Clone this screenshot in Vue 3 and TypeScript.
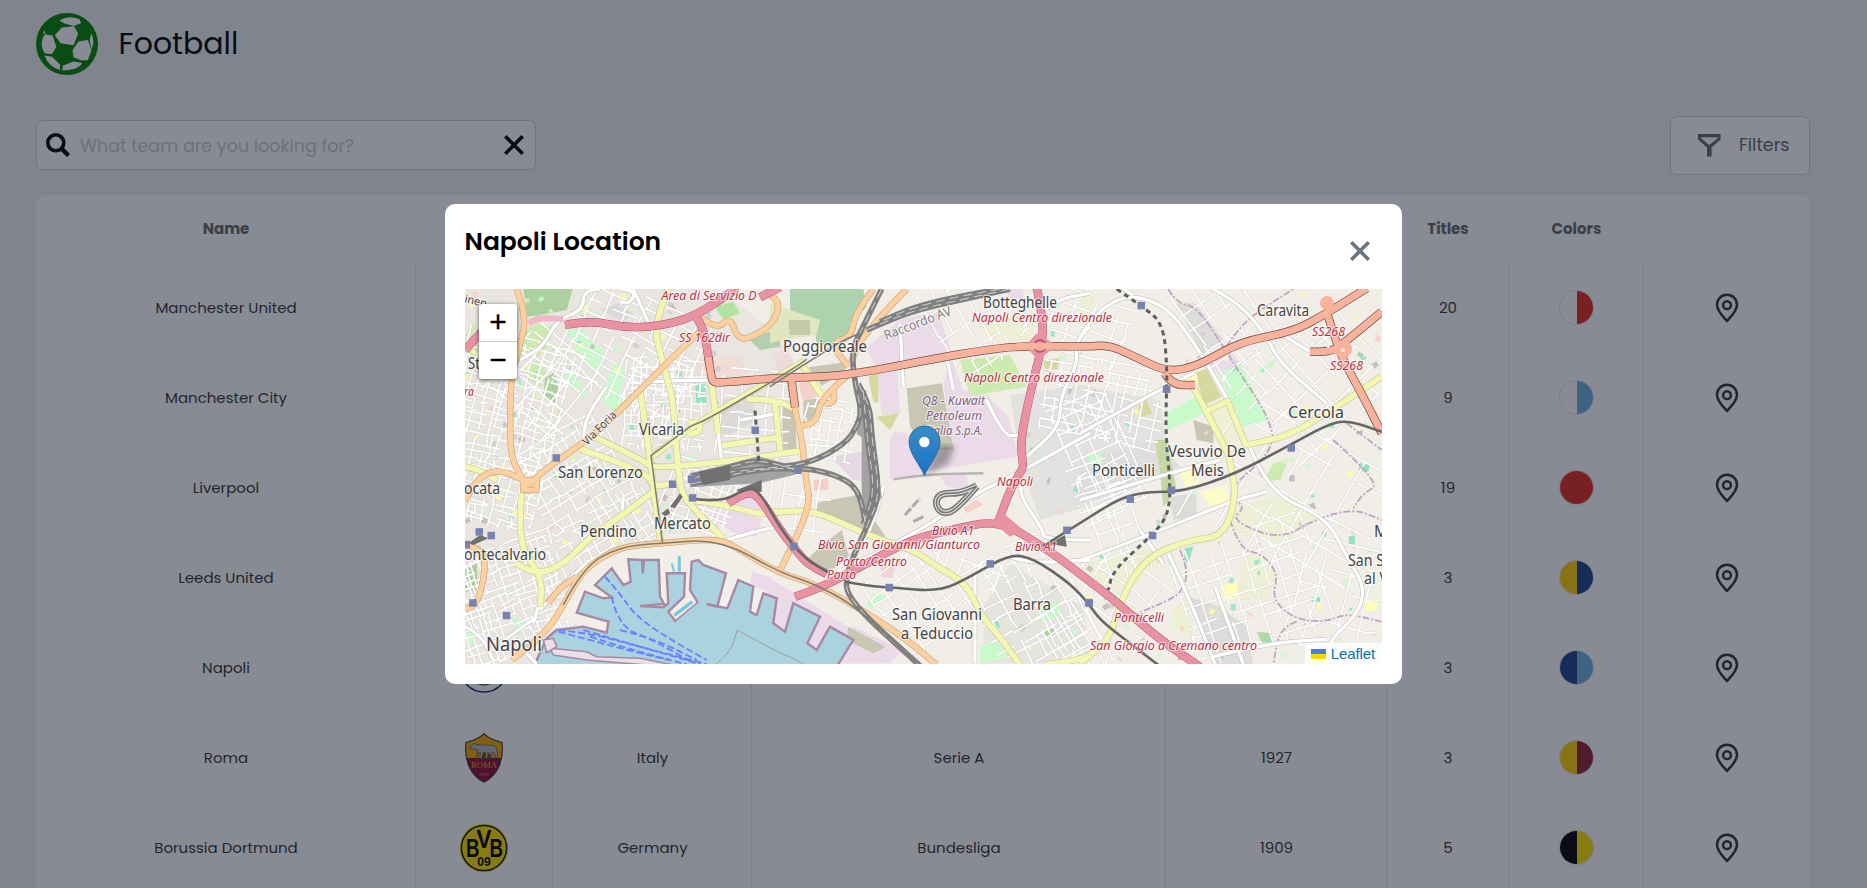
<script setup lang="ts">
interface Team {
  name: string
  country?: string
  league?: string
  founded?: string
  titles: number
  left: string
  right: string
  crest?: 'napoli' | 'roma' | 'bvb'
}

const teams: Team[] = [
  { name: 'Manchester United', titles: 20, left: '#ffffff', right: '#de2a20' },
  { name: 'Manchester City', titles: 9, left: '#ffffff', right: '#6cabdd' },
  { name: 'Liverpool', titles: 19, left: '#de2a20', right: '#de2a20' },
  { name: 'Leeds United', titles: 3, left: '#ffcd00', right: '#1d428a' },
  { name: 'Napoli', titles: 3, left: '#1d428a', right: '#6cabdd', crest: 'napoli' },
  { name: 'Roma', country: 'Italy', league: 'Serie A', founded: '1927', titles: 3, left: '#ffcd00', right: '#8e1f2f', crest: 'roma' },
  { name: 'Borussia Dortmund', country: 'Germany', league: 'Bundesliga', founded: '1909', titles: 5, left: '#000000', right: '#fde100', crest: 'bvb' },
]

type Pt = [number, number]

/* Survey sheets: each has its own origin and is plotted at a third of map scale. */
const sheets: Record<string, Pt> = {
  A: [440, 200],
  B: [770, 280],
  C: [1080, 200],
  D: [440, 430],
  E: [770, 450],
  F: [1080, 440],
  G: [445, 204],
}

function pts(src: string): Pt[] {
  let o: Pt = [0, 0]
  let k = 1
  const out: Pt[] = []
  for (const t of src.trim().split(/\s+/)) {
    if (sheets[t]) {
      o = sheets[t]
      k = 1 / 3
    } else {
      const [x, y] = t.split(',').map(Number)
      out.push([o[0] + x * k, o[1] + y * k])
    }
  }
  return out
}

const f = (n: number) => n.toFixed(1)

function curve(src: string): string {
  const p = pts(src)
  let d = `M${f(p[0][0])} ${f(p[0][1])}`
  for (let i = 1; i < p.length - 1; i++) {
    const mx = (p[i][0] + p[i + 1][0]) / 2
    const my = (p[i][1] + p[i + 1][1]) / 2
    d += `Q${f(p[i][0])} ${f(p[i][1])} ${f(mx)} ${f(my)}`
  }
  const l = p[p.length - 1]
  return d + `L${f(l[0])} ${f(l[1])}`
}

function poly(src: string): string {
  return pts(src).map((q) => `${f(q[0])},${f(q[1])}`).join(' ')
}

const areas: [string, string][] = [
  ['#e9e6e2', '465,289 720,289 790,345 790,460 700,530 640,540 590,560 545,620 545,664 465,664'],
  ['#e4e2e0', '1010,395 1080,385 1160,400 1170,470 1110,500 1040,520 1022,470'],
  ['#e6e4e1', 'E 720,340 940,470 960,640 640,640 640,470'],
  ['#dddcdb', 'F 270,170 350,160 350,230 280,240'],
  ['#dddcdb', 'F 330,470 420,500 500,560 520,672 400,672'],
  ['#dddcdb', 'C 290,310 345,310 430,420 370,470'],
  ['#e0dedc', 'F 0,60 230,0 300,80 0,170'],
  ['#add19e', 'A 250,267 398,267 380,330 300,345 262,350'],
  ['#cdebb0', 'A 245,390 290,370 340,380 325,440 290,475 240,470'],
  ['#c8facc', 'A 370,390 430,388 450,425 492,450 488,510 450,500 410,460 400,420'],
  ['#c8facc', 'A 520,488 555,510 540,570 560,640 520,635 485,595'],
  ['#c8facc', 'A 360,510 400,505 425,560 390,565'],
  ['#cdebb0', 'A 250,505 295,480 320,520 300,560 265,540'],
  ['#add19e', 'A 315,535 345,515 355,570 345,610 310,590'],
  ['#cdebb0', 'A 75,400 105,370 120,460 90,470'],
  ['#d9d9d9', 'A 480,330 530,310 580,340 550,365'],
  ['#b0e3a0', 'A 825,320 880,305 900,340 850,358'],
  ['#b3cfae', 'A 930,420 1020,380 1020,440 960,450'],
  ['#f1dcd8', 'A 765,480 900,470 925,520 830,540 770,540'],
  ['#8fe3c0', 'G 750,545 780,540 785,595 755,600'],
  ['#dcdad8', 'G 825,590 920,560 930,650 860,690 830,690'],
  ['#add3ae', 'B 60,27 280,27 290,80 240,130 235,170 180,200 140,190 130,120 60,110'],
  ['#dfe6c0', 'B 0,70 60,90 150,120 140,165 40,180 0,190'],
  ['#c6c9a8', 'B 55,120 120,120 120,165 60,165'],
  ['#ebdbe8', 'B 285,205 390,120 505,90 548,232 320,262'],
  ['#ebdbe8', 'B 320,260 382,265 390,400 335,405'],
  ['#ebdbe8', 'B 545,240 580,330 650,345 715,410 745,530 555,560 520,310'],
  ['#ebdbe8', 'B 358,480 375,455 410,460 430,500 440,590 360,597'],
  ['#ebdbe8', 'B 700,27 760,27 760,55 730,60'],
  ['#c7c7b4', 'B 410,325 515,310 555,530 500,550 420,440'],
  ['#d6d99f', 'B 318,410 388,400 360,450'],
  ['#d6d99f', 'B 295,290 325,280 325,370 310,365'],
  ['#cdebb0', 'B 570,240 720,225 770,320 600,348'],
  ['#eef0d5', 'B 620,120 790,100 790,180 660,190'],
  ['#d6d99f', 'B 820,240 870,235 860,275 825,275'],
  ['#f4d0c8', 'G 1060,540 1105,520 1125,575 1075,590'],
  ['#ebdcdc', 'G 975,445 1030,440 1050,480 1000,500'],
  ['#c7c7b4', 'G 1075,590 1125,580 1110,650 1075,655'],
  ['#c7c7b4', 'G 1090,490 1200,475 1200,500 1130,545'],
  ['#c7c7b4', 'G 1010,600 1050,620 1055,735 1015,735'],
  ['#eef0d5', 'C 0,280 50,270 20,400 0,400'],
  ['#ebdbe8', 'C 388,490 440,440 480,490 415,522'],
  ['#c8facc', 'C 415,520 482,490 560,660 490,680'],
  ['#d6d99f', 'C 345,520 380,505 425,590 375,615'],
  ['#c8facc', 'C 260,640 345,592 375,640 260,692'],
  ['#ffffc0', 'C 290,540 350,520 355,550 300,560'],
  ['#eef0d5', 'C 385,640 440,615 480,745 440,745'],
  ['#c7c7b4', 'C 340,660 400,680 400,730 350,720'],
  ['#c8facc', 'C 540,505 585,480 580,500 540,520'],
  ['#d6d99f', 'C 175,620 200,600 215,640 180,655'],
  ['#eef0d5', 'F 500,190 640,160 740,230 600,305 450,280 455,230'],
  ['#eef0d5', 'F 490,340 545,345 590,400 565,480 450,480 480,420'],
  ['#eef0d5', 'F 0,375 200,320 240,370 160,440 80,450'],
  ['#eef0d5', 'F 280,500 320,480 340,600 270,560'],
  ['#fdfcc9', 'F 360,155 440,135 450,185 390,200'],
  ['#fdfcc9', 'F 300,95 350,90 365,130 315,140'],
  ['#ffffb8', 'F 420,435 470,430 475,475 430,482'],
  ['#ffffb8', 'F 850,480 893,480 890,510 855,515'],
  ['#b5d6a6', 'F 530,575 575,580 580,605 545,608'],
  ['#8fe3c0', 'F 840,70 870,75 865,95 835,90'],
  ['#8fe3c0', 'F 805,290 825,285 825,310 808,315'],
  ['#8fe3c0', 'F 695,472 720,472 720,485 695,485'],
  ['#8fe3c0', 'F 315,325 340,320 325,370 312,360'],
  ['#c3d8a2', 'F 225,0 260,0 290,150 250,200 240,90'],
  ['#cdebb0', 'F 580,70 625,60 600,120 550,125'],
  ['#c8facc', 'F 20,45 60,30 70,70 35,80'],
  ['#c7c7b4', 'E 140,158 262,135 350,265 240,225 140,185'],
  ['#c7c7b4', 'E 150,290 215,240 240,330 170,365 110,330'],
  ['#e7d9e4', 'E 180,20 310,0 320,100 250,90'],
  ['#ebdbe8', 'E 360,0 560,0 700,20 370,85'],
  ['#ebdbe8', 'E 0,400 90,440 250,560 210,640 0,520'],
  ['#ebdbe8', 'E 250,530 400,600 360,640 230,640'],
  ['#c7c7b4', 'E 235,530 345,590 310,610 230,570'],
  ['#ebdbe8', 'E 510,80 590,70 595,120 530,110'],
  ['#c8facc', 'E 310,430 350,440 300,480 290,460'],
  ['#c8facc', 'E 800,470 860,455 880,500 810,515'],
  ['#c8facc', 'E 630,590 670,570 720,620 630,640'],
  ['#8fe3c0', 'E 665,515 680,508 690,530 672,540'],
  ['#add19e', 'E 820,545 850,535 855,555 825,565'],
  ['#f4d4d4', 'E 330,345 375,340 370,385 335,380'],
  ['#f4d0c8', 'E 580,175 620,150 640,165 590,190'],
  ['#f4d0c8', 'E 130,90 175,85 175,120 132,120'],
  ['#ebdbe8', 'D 815,260 870,240 965,265 950,320 880,310'],
  ['#ebdbe8', 'D 860,210 910,190 960,200 965,240 900,235'],
  ['#ebdbe8', 'D 930,430 1020,430 1020,520 980,480 930,470'],
  ['#add19e', 'D 75,420 110,400 115,480 75,485'],
  ['#c8facc', 'D 75,595 105,600 100,640 75,640'],
  ['#c8facc', 'D 215,560 260,575 230,600'],
]

const sea = poly(
  'D 350,600 430,590 500,608 505,575 410,548 435,485 490,505 515,502 465,465 515,415 550,465 572,455 565,388 606,390 608,430 612,390 656,390 660,500 672,522 600,528 670,532 685,520 680,430 735,430 732,500 685,545 705,572 772,515 750,480 755,395 775,390 790,405 858,430 832,530 800,522 862,535 895,450 940,470 930,545 950,555 970,490 1010,505 1000,580 E 45,545 70,460 150,500 112,580 140,600 180,530 250,570 200,650 D 480,720 290,720 290,690 320,625',
)

/* Irregular street grids: centre, extent, bearing and block size. */
const districts: number[][] = [
  [500, 430, 110, 190, 15, 8],
  [510, 600, 110, 120, 70, 8],
  [590, 500, 150, 100, 60, 10],
  [630, 350, 130, 110, 25, 13],
  [545, 385, 90, 90, 40, 16],
  [665, 405, 80, 90, 3, 7],
  [755, 415, 70, 90, 5, 13],
  [700, 500, 70, 70, 20, 10],
  [800, 500, 60, 60, 10, 18],
  [830, 430, 50, 60, 8, 8],
  [960, 320, 110, 60, 60, 17],
  [1080, 325, 100, 60, 20, 17],
  [1100, 400, 130, 80, 12, 12],
  [1100, 455, 120, 60, 65, 11],
  [1110, 520, 120, 50, 70, 12],
  [1225, 325, 110, 70, 55, 20],
  [1310, 380, 120, 130, 48, 19],
  [1290, 500, 180, 140, 30, 30],
  [1250, 590, 120, 140, 72, 18],
  [1340, 600, 90, 110, 15, 28],
  [1030, 610, 130, 100, 62, 12],
  [920, 600, 90, 80, 55, 13],
  [1120, 590, 90, 60, 35, 18],
  [960, 560, 100, 40, 20, 18],
  [1080, 650, 100, 50, 60, 14],
]

let seed = 20231
function rnd(): number {
  seed = (seed * 16807) % 2147483647
  return seed / 2147483647
}

function streets(): string {
  let d = ''
  for (const [cx, cy, w, h, deg, gap] of districts) {
    const a = (deg * Math.PI) / 180
    const put = (u: number, v: number) =>
      `${f(cx + u * Math.cos(a) - v * Math.sin(a))} ${f(cy + u * Math.sin(a) + v * Math.cos(a))}`
    for (let u = -w / 2; u < w / 2; u += gap * (0.6 + rnd() * 0.9)) {
      let v = -h / 2 + rnd() * gap
      while (v < h / 2) {
        const len = gap * (1 + Math.floor(rnd() * 5))
        const s = (rnd() - 0.5) * 5
        d += `M${put(u, v)}L${put(u + s, Math.min(v + len, h / 2))}`
        v += len + (rnd() < 0.5 ? gap : 0)
      }
    }
    for (let v = -h / 2; v < h / 2; v += gap * (0.6 + rnd() * 0.9)) {
      let u = -w / 2 + rnd() * gap
      while (u < w / 2) {
        const len = gap * (1 + Math.floor(rnd() * 4))
        const s = (rnd() - 0.5) * 5
        d += `M${put(u, v)}L${put(Math.min(u + len, w / 2), v + s)}`
        u += len + (rnd() < 0.5 ? gap : 0)
      }
    }
  }
  return d
}
const streetPath = streets()

const patchHues = ['#ffff9e', '#c8facc', '#8fe3c0', '#cdcccb', '#b9b8b4', '#f7d0c6', '#dff0c0']
const patches = Array.from({ length: 330 }, () => {
  const west = rnd() < 0.55
  const x = west ? 466 + rnd() * 260 : 1000 + rnd() * 378
  const y = 290 + rnd() * (west ? 250 : 370)
  return { x, y, w: 2 + rnd() * 5, h: 2 + rnd() * 5, r: rnd() * 90, c: patchHues[Math.floor(rnd() * 7)] }
})

const lanes = [
  'C 0,410 80,285 250,300 370,470 440,595',
  'C 400,267 480,310 560,410 600,490 740,610',
  'C 0,700 200,590 340,520',
  'C 600,400 690,455',
  'C 130,267 160,285',
  'F 0,180 300,90 420,60',
  'F 505,10 560,155 740,232 800,350 855,440 835,520 760,590 740,640',
  'F 0,362 220,280 450,185 560,155',
  'F 265,340 330,480 405,672',
  'F 405,440 490,672',
  'F 400,650 560,610 740,598',
  'F 250,372 180,270',
  'B 960,140 915,180 925,250 870,350 870,440 770,530',
  'B 960,460 780,560 700,600 E 620,130 460,235 260,340',
  'B 760,140 850,60 960,40',
  'E 960,270 820,270 820,240 750,140 755,80',
  'E 720,320 770,340 960,330',
  'E 615,370 615,640',
  'E 340,110 300,265 210,350',
  'A 580,267 640,400',
  'A 480,267 430,270 430,330 350,360 310,440 240,480',
  'A 540,267 590,270 570,310 540,305',
  'A 500,560 440,640 430,720',
  'A 610,545 800,540',
  'A 1020,640 900,660',
  'D 300,540 360,470 440,400',
  'D 550,200 545,260',
  'D 280,580 295,530',
  'D 180,640 290,560',
  'D 240,650 290,702',
  'D 75,590 120,610 160,690',
  'D 860,330 960,300 1020,290',
  'G 820,690 830,770',
  'B 645,350 700,470 750,465',
  'B 390,130 400,320',
  'B 530,230 550,330',
]

const yellow = [
  'A 685,267 640,370 665,480 700,600 705,700 D 720,170 740,215 850,325',
  'A 600,570 620,700 D 640,170 662,340',
  'G 440,695 600,770 620,795 870,770 1070,740',
  'G 405,735 600,800 625,850 700,835',
  'D 640,185 540,260 440,330 380,395 300,435 225,400',
  'D 245,190 230,340 305,435 302,530',
  'D 75,110 120,120 170,150',
  'D 750,210 860,225 960,255 1020,240 E 0,190 120,178 240,230 320,265 430,300 500,350 590,400 635,500 690,560 750,645',
  'C 340,560 440,750 F 450,60 470,170 430,290 330,300 200,350 125,470 90,600 0,668',
  'C 375,635 443,603 443,603 497,735 497,735 620,710 740,640 905,530',
  'G 800,540 820,690',
  'G 1080,470 960,540 760,655 625,755',
  'G 1070,480 1130,575',
  'G 905,585 985,585 1060,620',
  'G 990,590 1005,740',
  'G 830,725 1000,700',
  'G 730,655 765,655 765,685 730,690',
  'E 820,645 900,635 960,618',
]

const orange = [
  'A 230,267 262,350 235,450 212,540 D 210,0 215,90 250,150 265,170',
  'D 265,165 300,130 370,80 480,0 A 600,570 700,470 790,385',
  'A 780,350 830,390 870,350 895,420 940,410 1000,370 1020,310 990,285 1000,267',
  'D 75,215 100,155 170,115 250,150',
  'D 75,345 115,350 140,400 115,520 75,538',
  'D 250,150 290,150 290,150 290,180 290,180 250,180 250,180 250,150',
  'D 215,690 320,615 400,470 440,410 540,350 660,340 840,325 900,360 1020,430 E 130,400 260,470 400,560 500,645',
  'D 325,520 350,480 410,440',
  'G 1035,530 1050,620 1070,700 1082,820 1097,910 1005,1100',
  'B 410,27 270,170 240,260',
  'B 310,27 255,100 245,170 180,190 235,260',
  'G 1225,500 1130,575 1115,655 1060,668',
  'G 1140,600 1170,600 1165,550',
]

const trunk = [
  'A 805,470 812,520 818,545 835,549 1020,533 B 100,292 240,285 500,235 630,212 750,198 960,200 C 90,435 180,478 260,515 350,500 480,425 640,395 740,340 860,265',
  'C 905,335 780,440 745,455 690,455',
  'C 738,330 775,445 800,500 850,590 905,700',
  'C 255,520 275,555 345,555',
  'G 1040,530 1050,610',
]

const motor = [
  'A 375,375 450,360 560,385 680,375 770,345 870,280 890,262',
  'A 960,292 1020,262',
  'A 765,345 790,380 805,470 808,490',
  'B 800,20 818,110 818,190 790,300 750,480 760,560 E 755,60 720,120 685,215',
  'E 75,440 150,415 280,345 420,270 560,235 690,210 850,310 960,395 F 90,470 240,600 360,680',
  'D 865,220 905,192 950,188 1020,300 E 70,290 110,340 170,372',
  'A 75,450 130,390',
]

const yards = [
  'G 1310,255 1250,375 1220,440 1230,540 1250,620 1235,670 1200,720 1100,775 1000,790 740,815',
  'G 1240,540 1275,600 1280,700 1305,870 1270,960 1200,1110 1210,1190 1430,1390',
  'G 1255,560 1265,700 1290,860 1255,960',
  'B 720,27 570,60 420,95 290,150',
  'B 690,27 560,50 430,82 330,125',
  'G 740,840 900,800 1060,790 1160,808 1240,850 1262,960',
  'G 740,825 850,790 940,765 1060,800',
]

const rails = [
  'G 745,885 830,895 900,855 940,855 1010,980 1080,1065 1150,1105',
  'E 225,395 300,408 360,412 510,425 600,380 720,312 790,325 900,400 955,460 F 60,540 150,610 235,675',
  'E 820,288 960,200 F 120,175 200,155 310,155 470,100 620,20 C 740,675 800,660 905,695',
]

const tramline = [
  'G 1085,465 1070,480 790,645 740,665 740,665 618,755 618,755 652,1015',
  'D 370,525 430,410 540,350 660,340 840,328 1020,428 E 130,400 260,470 440,640',
  'B 0,320 200,190 270,160',
]

const tunnels = [
  'C 110,267 185,318 250,370 262,510 258,620 258,710 F 272,150 262,230 217,285 100,390 85,450',
  'G 930,620 942,780',
]

const borders = [
  'C 265,267 290,310 350,320 430,440 480,520 560,640 590,745 F 430,160 500,200 450,240 600,300 700,240 820,205 905,240',
  'C 440,440 480,370 640,267',
  'C 800,670 905,750',
  'F 760,0 905,130 850,160 820,205',
  'F 450,240 480,330 545,340 595,400 575,480 650,540 740,545 800,520 905,545',
  'F 300,330 350,440 180,520 100,540',
  'F 650,545 600,560 580,672',
]

const ferries = [
  'D 495,440 540,490 580,550 660,610 800,690',
  'D 515,500 535,590 640,630 760,700',
  'D 355,600 450,610 560,640 800,702',
  'D 355,605 450,630 600,670 740,702',
  'D 430,600 600,650 780,702',
  'D 450,620 560,655 690,690',
  'D 540,600 640,625 770,690',
]

const stations = pts(
  'D 348,83 697,162 754,147 757,203 117,305 153,316 78,343 98,518 199,556 945,0 E 83,60 71,289 357,412 660,341 890,240 955,457 C 183,316 259,567 F 633,23 150,177 273,150 217,286 27,488',
)

type Label = [string, number, number, number, number]
const places: Label[] = [
  ['St', 468, 480, 369, 16],
  ['Vicaria', 639, 684, 435, 16],
  ['Poggioreale', 783, 867, 352, 16],
  ['Botteghelle', 983, 1057, 308, 15.5],
  ['Caravita', 1257, 1309, 316, 15.5],
  ['Cercola', 1288, 1344, 418, 17],
  ['Vesuvio De', 1168, 1246, 457, 16],
  ['Meis', 1191, 1224, 476, 16],
  ['Ponticelli', 1092, 1155, 476, 16],
  ['San S', 1348, 1384, 566, 15.5],
  ['al V', 1364, 1388, 584, 15.5],
  ['M', 1374, 1388, 537, 15.5],
  ['Barra', 1013, 1051, 610, 16],
  ['San Giovanni', 892, 982, 620, 16],
  ['a Teduccio', 901, 973, 639, 16],
  ['San Lorenzo', 558, 643, 478, 16],
  ['Pendino', 580, 637, 537, 16],
  ['Mercato', 654, 711, 529, 16],
  ['ocata', 464, 500, 494, 16],
  ['ontecalvario', 464, 546, 560, 16],
  ['Napoli', 486, 542, 651, 20],
]
const exits: Label[] = [
  ['Area di Servizio D', 661.5, 756.5, 299.5, 13],
  ['SS 162dir', 679, 730, 341.5, 13],
  ['ra', 464, 474, 396, 13],
  ['Napoli Centro direzionale', 972, 1112, 322, 13],
  ['Napoli Centro direzionale', 964, 1104, 381.5, 13],
  ['SS268', 1312, 1345, 336, 13],
  ['SS268', 1330, 1363, 370, 13],
  ['Napoli', 997, 1033, 486, 13],
  ['Bivio A1', 932, 974, 535, 13],
  ['Bivio San Giovanni/Gianturco', 818, 980, 549, 13],
  ['Porto/Centro', 836, 907, 566, 13],
  ['Porto', 827, 856, 579, 13],
  ['Bivio A1', 1015, 1057, 551, 13],
  ['Ponticelli', 1114, 1164, 622, 13],
  ['San Giorgio a Cremano centro', 1090, 1257, 650, 13],
]
const works: Label[] = [
  ['Q8 - Kuwait', 922, 985, 405, 13],
  ['Petroleum', 926, 982, 420, 13],
  ['Italia S.p.A.', 926, 983, 435, 13],
]

const roadClasses = [
  { id: 'lane', lines: lanes },
  { id: 'yellow', lines: yellow },
  { id: 'orange', lines: orange },
  { id: 'motor', lines: motor },
  { id: 'trunk', lines: trunk },
]
</script>

<template>
  <div class="page">
    <header class="brand">
      <svg class="ball" viewBox="0 0 62 62">
        <circle cx="31" cy="31" r="31" fill="#008000" />
        <g fill="#fff">
          <path d="M23.500 7.500Q33 1.500 43.500 6.300L45 10.300 37.500 13 28.500 10.500Z" />
          <path d="M25.800 14.500 38 13.200 42.200 20.800 37.400 32.300 24.600 30.300 18.800 22.300Z" />
          <path d="M8.800 21.300 16.500 22.500 20.400 34 15.800 41.300 8.600 40.300Q2.500 31 8.800 21.300Z" />
          <path d="M42.500 28.500 51.800 27 55.500 37 51.800 47.300 45 47.300 37.500 44.300 36.500 37Z" />
          <path d="M26.500 52.700 37.500 48.500 46 50Q43 57 26.500 57.500Z" />
          <path d="M8.500 42.600 16 43.800 24 51.500V57Q12.500 54 8.500 42.600Z" />
          <path d="M55.300 20.500Q59.500 28 55.500 36L53.500 27Z" />
          <path d="M8.300 17.500 9.500 20 7 21Z" />
        </g>
      </svg>
      <h1>Football</h1>
    </header>

    <div class="toolbar">
      <label class="search">
        <svg width="24" height="24" viewBox="0 0 24 24" fill="none" stroke="#000" stroke-width="3.600">
          <circle cx="9.800" cy="9.800" r="8" />
          <path d="M15.500 15.500 22.600 22.600" stroke-width="4.400" />
        </svg>
        <span class="hint">What team are you looking for?</span>
        <svg width="20" height="20" viewBox="0 0 20 20" stroke="#000" stroke-width="3.600">
          <path d="M1.300 1.300 18.700 18.700M18.700 1.300 1.300 18.700" />
        </svg>
      </label>
      <button class="filters">
        <svg width="23" height="23" viewBox="0 0 23 23">
          <path fill="#666" fill-rule="evenodd" d="M0 0H22.600V5.600L13.600 13.400V22.400H9V13.400L0 5.600ZM3 3.200V4.200L11.300 11 19.600 4.200V3.200Z" />
        </svg>
        <span>Filters</span>
      </button>
    </div>

    <section class="table">
      <div class="row head">
        <span>Name</span><span /><span /><span /><span /><span>Titles</span><span>Colors</span><span />
      </div>
      <div v-for="t in teams" :key="t.name" class="row">
        <span>{{ t.name }}</span>
        <span class="figure">
          <svg v-if="t.crest === 'napoli'" width="50" height="50" viewBox="0 0 50 50" fill="none">
            <circle cx="25" cy="25" r="24" stroke="#12206b" stroke-width="1.400" />
            <ellipse cx="25" cy="24" rx="16" ry="18" stroke="#12206b" stroke-width="1" />
          </svg>
          <svg v-else-if="t.crest === 'roma'" width="38" height="50" viewBox="0 0 38 50">
            <path d="M19 .6C14 6 7 8 1 9.500C-1 27 5 42 19 49.200C33 42 39 27 37 9.500C31 8 24 6 19 .6Z" fill="#8e0a32" />
            <path d="M19 .6C14 6 7 8 1 9.500C.4 15 .5 20 1.300 25H36.700C37.500 20 37.600 15 37 9.500C31 8 24 6 19 .6Z" fill="#f0a800" />
            <path d="M19 .6C14 6 7 8 1 9.500C-1 27 5 42 19 49.200C33 42 39 27 37 9.500C31 8 24 6 19 .6Z" fill="none" stroke="#333" stroke-width="1.100" />
            <path d="M5.500 13 8.500 10.500 12 11.500 17 12 29 12.500Q33 14 32.500 25H30.500L29.500 20 27 19.500V25H25V20L18 19.500 17 25.500H15L15.500 19 13 20V25.500H11.500L12.500 17 8.500 16 5 15.500Z" fill="#b5b5b5" stroke="#444" stroke-width=".6" />
            <path d="M17 24 18.500 20 21 20.500 20 25.500H17.500ZM22 25 23 21 25.500 21 25 26H22Z" fill="#444" />
            <text x="19" y="34.500" text-anchor="middle" class="roma-name" textLength="26" lengthAdjust="spacingAndGlyphs">ROMA</text>
            <text x="19" y="42.500" text-anchor="middle" class="roma-year">1927</text>
          </svg>
          <svg v-else-if="t.crest === 'bvb'" width="50" height="50" viewBox="0 0 50 50">
            <circle cx="25" cy="25" r="24.300" fill="#fde100" />
            <circle cx="25" cy="25" r="22.600" fill="none" stroke="#111" stroke-width="1.500" />
            <g class="bvb">
              <text x="13.800" y="33.500" font-size="25" textLength="13.500" lengthAdjust="spacingAndGlyphs">B</text>
              <text x="25" y="24.500" font-size="25" textLength="15" lengthAdjust="spacingAndGlyphs">V</text>
              <text x="37.300" y="33.500" font-size="25" textLength="13.500" lengthAdjust="spacingAndGlyphs">B</text>
              <text x="25" y="43.300" font-size="13" textLength="13.500" lengthAdjust="spacingAndGlyphs">09</text>
            </g>
          </svg>
        </span>
        <span>{{ t.country }}</span>
        <span>{{ t.league }}</span>
        <span>{{ t.founded }}</span>
        <span>{{ t.titles }}</span>
        <span class="figure">
          <i class="kit"><b :style="{ background: t.left }" /><b :style="{ background: t.right }" /></i>
        </span>
        <span class="figure">
          <svg width="24" height="30" viewBox="0 0 24 30" fill="none" stroke="#333" stroke-width="2.500">
            <path d="M12 28C9 24.500 2 18.500 2 11.800A10 10 0 0 1 22 11.800C22 18.500 15 24.500 12 28Z" stroke-linejoin="round" />
            <circle cx="12" cy="12.200" r="3.900" />
          </svg>
        </span>
      </div>
    </section>

    <div class="overlay">
      <div class="modal">
        <div class="modal-head">
          <h2>Napoli Location</h2>
          <svg class="close" width="20" height="20" viewBox="0 0 20 20" stroke="#6b7280" stroke-width="3.600">
            <path d="M1.300 1.300 18.700 18.700M18.700 1.300 1.300 18.700" />
          </svg>
        </div>
        <div class="map">
          <svg width="917" height="375" viewBox="465 289 917 375">
            <defs>
              <linearGradient id="pin" x1="0" y1="0" x2="0" y2="1">
                <stop offset="0" stop-color="#3a8ec4" />
                <stop offset="1" stop-color="#1b6fc6" />
              </linearGradient>
              <filter id="soft"><feGaussianBlur stdDeviation="3" /></filter>
            </defs>
            <rect x="465" y="289" width="917" height="375" fill="#f1eee8" />
            <polygon v-for="(a, i) in areas" :key="'a' + i" :points="poly(a[1])" :fill="a[0]" />
            <rect
              v-for="(p, i) in patches" :key="'p' + i" :x="p.x" :y="p.y" :width="p.w" :height="p.h"
              :fill="p.c" :transform="`rotate(${p.r} ${p.x} ${p.y})`" opacity=".8"
            />
            <path :d="streetPath" class="street-edge" />
            <path :d="streetPath" class="street" />
            <polygon :points="poly('D 345,560 430,425 560,365 660,352 850,345 1020,440 1020,600 850,600 500,610')" fill="#f2efe9" />
            <polygon :points="poly('D 935,425 1020,450 E 0,385 90,440 250,540 350,640 0,640 0,510 D 980,480 930,470')" fill="#ebdbe8" />
            <polygon :points="poly('E 235,530 345,590 310,610 230,570')" fill="#c7c7b4" />
            <polygon :points="sea" class="sea" />
            <polygon :points="poly('D 330,655 440,665 470,680 600,685 700,705 620,705 440,690 340,675')" class="pier" />
            <polygon :points="poly('D 310,630 340,625 350,650 320,668')" class="pier" />
            <path :d="curve('D 820,710 870,670 892,600 892,600 1020,670 E 60,620 130,660')" fill="none" stroke="#a39c98" />
            <path v-for="(l, i) in ferries" :key="'f' + i" :d="curve(l)" class="ferry" />
            <path :d="curve('D 695,400 702,425')" stroke="#79c9dd" stroke-width="2" />
            <path :d="curve('D 718,378 718,425')" stroke="#79c9dd" stroke-width="3" />
            <polygon :points="poly('D 690,548 708,568 768,518 752,495')" fill="#f2efe9" />
            <path :d="curve('D 703,556 757,515')" stroke="#79c9dd" stroke-width="3.500" />
            <path v-for="(l, i) in borders" :key="'b' + i" :d="curve(l)" class="border" />
            <g v-for="c in roadClasses.slice(0, 3)" :key="c.id" :class="c.id">
              <path v-for="(l, i) in c.lines" :key="i" :d="curve(l)" class="edge" />
              <path v-for="(l, i) in c.lines" :key="'i' + i" :d="curve(l)" class="core" />
            </g>
            <polygon :points="poly('G 735,808 830,785 940,757 1050,788 1050,812 940,838 735,850')" fill="#a3a3a3" />
            <polygon :points="poly('G 1250,560 1275,600 1310,880 1265,960 1250,860 1250,700 1235,690')" fill="#a3a3a3" />
            <path v-for="(l, i) in yards" :key="'y' + i" :d="curve(l)" class="yard" />
            <path v-for="(l, i) in yards" :key="'z' + i" :d="curve(l)" class="yard-gap" />
            <g class="shed">
              <polygon :points="poly('D 775,125 870,105 870,150 790,165')" />
              <polygon :points="poly('D 665,250 685,235 690,250 675,260')" />
              <polygon :points="poly('D 690,230 720,190 728,200 705,235')" />
              <polygon :points="poly('D 85,340 120,315 145,325 100,345')" />
              <polygon :points="poly('D 890,180 965,150 965,185 900,190')" />
              <polygon :points="poly('E 820,290 885,255 890,290 860,285')" />
            </g>
            <path :d="curve('E 620,108 560,180 515,192 495,160 510,130 570,130 620,108')" fill="none" stroke="#777" stroke-width="7" />
            <path :d="curve('E 620,108 560,180 515,192 495,160 510,130 570,130 620,108')" fill="none" stroke="#ddd" stroke-width="4" />
            <path :d="curve('E 620,108 560,180 515,192 495,160 510,130 570,130 620,108')" fill="none" stroke="#777" stroke-width="1.600" />
            <path :d="curve('E 405,195 450,145')" stroke="#aaa" stroke-width="3" stroke-dasharray="9 2" />
            <path :d="curve('E 430,215 460,200')" stroke="#aaa" stroke-width="3" />
            <path :d="curve('E 370,88 470,72 640,70')" fill="none" stroke="#b5b5b5" stroke-width="2.500" />
            <path :d="curve('A 265,370 290,352 370,358')" class="tunnel-road" />
            <g v-for="c in roadClasses.slice(3)" :key="c.id" :class="c.id">
              <path v-for="(l, i) in c.lines" :key="i" :d="curve(l)" class="edge" />
              <path v-for="(l, i) in c.lines" :key="'i' + i" :d="curve(l)" class="core" />
            </g>
            <polygon :points="poly('E 650,220 700,190 760,240 720,260 690,235')" fill="#e892a2" />
            <polygon :points="poly('B 765,198 800,160 850,190 850,205 805,240')" fill="#e892a2" />
            <circle cx="1040" cy="346" r="6" fill="none" stroke="#a3506a" stroke-width="1.500" />
            <path :d="curve('B 740,199 870,199')" stroke="#f9b29c" stroke-width="6.500" />
            <circle cx="1327" cy="303" r="7" fill="#f9b29c" />
            <circle cx="1343" cy="349" r="9" fill="#f9b29c" />
            <circle cx="1343" cy="350" r="2" fill="#f1eee8" />
            <circle cx="1328" cy="346" r="2" fill="#f1eee8" />
            <path v-for="(l, i) in rails" :key="'r' + i" :d="curve(l)" class="rail" />
            <path v-for="(l, i) in tramline" :key="'t' + i" :d="curve(l)" class="tram" />
            <path v-for="(l, i) in tunnels" :key="'u' + i" :d="curve(l)" class="tunnel" />
            <rect v-for="(s, i) in stations" :key="'s' + i" :x="s[0] - 3.500" :y="s[1] - 3.500" width="7.500" height="7.500" fill="#7981b0" />
            <g class="label works">
              <text v-for="(l, i) in works" :key="i" :x="l[1]" :y="l[3]" :font-size="l[4]" :textLength="l[2] - l[1]" lengthAdjust="spacingAndGlyphs">{{ l[0] }}</text>
            </g>
            <g class="label places">
              <text v-for="(l, i) in places" :key="i" :x="l[1]" :y="l[3]" :font-size="l[4]" :textLength="l[2] - l[1]" lengthAdjust="spacingAndGlyphs">{{ l[0] }}</text>
            </g>
            <g class="label exits">
              <text v-for="(l, i) in exits" :key="i" :x="l[1]" :y="l[3]" :font-size="l[4]" :textLength="l[2] - l[1]" lengthAdjust="spacingAndGlyphs">{{ l[0] }}</text>
            </g>
            <text class="along" transform="translate(587 446) rotate(-45)" font-size="11.500" textLength="43" lengthAdjust="spacingAndGlyphs">Via Foria</text>
            <text class="along pale" transform="translate(886 340) rotate(-21)" font-size="13" textLength="71" lengthAdjust="spacingAndGlyphs">Raccordo AV</text>
            <text class="along" transform="translate(464 302) rotate(14)" font-size="11">inen</text>
            <path d="M924 476 937 446 955 446 948 464Z" fill="#000" opacity=".32" filter="url(#soft)" />
            <path d="M924.500 475.500C921 466 909 454 909 441.500A15.500 15.500 0 0 1 940 441.500C940 454 928 466 924.500 475.500Z" fill="url(#pin)" stroke="#2d6f9f" stroke-width="1" />
            <circle cx="924.300" cy="442" r="5.500" fill="#fff" stroke="#2a6fa8" stroke-width=".6" />
          </svg>
          <div class="zoom"><span>+</span><span>−</span></div>
          <div class="credit"><i class="flag" />Leaflet</div>
        </div>
      </div>
    </div>
  </div>
</template>

<style>
body {
  margin: 0;
  overflow: hidden;
}
</style>

<style scoped>
.page {
  box-sizing: border-box;
  width: 1867px;
  height: 888px;
  overflow: hidden;
  padding: 13px 57px 0 36px;
  background: #eff0f2;
  color: #333;
  font-family: Poppins, Inter, "Open Sans", sans-serif;
}
.brand {
  display: flex;
  align-items: center;
  gap: 20.6px;
  height: 62px;
}
.ball {
  width: 62px;
  height: 62px;
}
h1 {
  margin: 0;
  font-size: 30px;
  font-weight: 400;
  color: #000;
}
.toolbar {
  display: flex;
  align-items: center;
  justify-content: space-between;
  height: 59px;
  margin-top: 41px;
}
.search {
  box-sizing: border-box;
  display: flex;
  align-items: center;
  width: 500px;
  height: 50px;
  margin-bottom: 1px;
  padding: 0 11px 0 9px;
  border: 1px solid #d1d1d6;
  border-radius: 7px;
  background: #fff;
}
.hint {
  flex: 1;
  margin-left: 10px;
  padding-top: 1px;
  font-size: 17.5px;
  color: #c9cacf;
}
.filters {
  box-sizing: border-box;
  display: flex;
  align-items: center;
  gap: 18px;
  width: 140px;
  height: 59px;
  padding: 0 0 1px 27px;
  border: 1px solid #d1d1d6;
  border-radius: 7px;
  background: #fff;
  font: inherit;
  font-size: 17.5px;
  color: #666;
}
.table {
  margin-top: 20px;
  height: 720px;
  border-radius: 9px 9px 0 0;
  background: #fff;
}
.row {
  display: grid;
  grid-template-columns: 380px 137px 199px 414px 221px 122px 135px 166px;
  height: 90px;
}
.row > span {
  box-sizing: border-box;
  display: flex;
  align-items: center;
  justify-content: center;
  padding: 0 0 2px 1px;
  border-right: 1px solid #e2e2e9;
  font-size: 15px;
}
.row > .figure {
  padding: 0;
}
.row > span:last-child {
  border: 0;
}
.head {
  height: 68px;
}
.head > span {
  border-color: transparent;
  font-weight: 700;
  color: #666;
}
.kit {
  display: flex;
  width: 33px;
  height: 33px;
  margin: 0 0 1px 1px;
  border: 1px solid #e0e0e8;
  border-radius: 50%;
  overflow: hidden;
}
.kit b {
  flex: 1;
}
.roma-name {
  font: 7.5px "Liberation Serif", serif;
  fill: #e0a010;
}
.roma-year {
  font: 5px "Liberation Serif", serif;
  fill: #c59aa5;
}
.bvb text {
  font-family: "Liberation Sans", sans-serif;
  font-weight: 700;
  text-anchor: middle;
  fill: #000;
}
.overlay {
  position: fixed;
  inset: 0;
  box-sizing: border-box;
  display: flex;
  align-items: center;
  justify-content: center;
  padding-right: 20px;
  background: rgba(17, 24, 39, 0.5);
}
.modal {
  box-sizing: border-box;
  width: 957px;
  height: 480px;
  padding: 20px;
  border-radius: 10px;
  background: #fff;
}
.modal-head {
  display: flex;
  justify-content: space-between;
  height: 65px;
}
h2 {
  margin: 0 0 0 -0.5px;
  font-size: 25px;
  font-weight: 600;
  line-height: 35px;
  color: #000;
}
.close {
  margin: 17px 12px 0 0;
}
.map {
  position: relative;
  height: 375px;
  overflow: hidden;
}
.map > svg {
  display: block;
}
.zoom {
  position: absolute;
  left: 14px;
  top: 15px;
  width: 38px;
  border-radius: 3px;
  background: #fff;
  box-shadow: 0 1px 4px rgba(0, 0, 0, 0.65);
}
.zoom span {
  display: block;
  height: 37px;
  font: 30px/36px "Liberation Sans", sans-serif;
  text-align: center;
  color: #000;
  -webkit-text-stroke: 0.3px #000;
}
.zoom span + span {
  border-top: 1px solid #ccc;
}
.credit {
  position: absolute;
  right: 0;
  bottom: 0;
  display: flex;
  align-items: center;
  gap: 5px;
  box-sizing: border-box;
  height: 21px;
  padding: 0 7px 0 6px;
  background: rgba(255, 255, 255, 0.8);
  font: 15px "Liberation Sans", sans-serif;
  color: #0078a8;
  letter-spacing: -0.1px;
}
.flag {
  width: 15px;
  height: 10px;
  background: linear-gradient(#4c7be1 50%, #ffd500 50%);
}
.street-edge,
.street {
  fill: none;
  stroke-linecap: round;
}
.street-edge {
  stroke: #c8c4c0;
  stroke-width: 2.6;
  opacity: 0.5;
}
.street {
  stroke: #fff;
  stroke-width: 1.6;
}
.sea {
  fill: #aad3df;
  stroke: #a889a5;
  stroke-width: 2.4;
}
.pier {
  fill: #eadfe4;
  stroke: #a889a5;
  stroke-width: 1.6;
}
.ferry {
  fill: none;
  stroke: #7080ff;
  stroke-width: 1.9;
  stroke-dasharray: 7 3;
}
.border {
  fill: none;
  stroke: #c0a3c4;
  stroke-width: 1.8;
  stroke-dasharray: 7 2 2 2;
}
.edge,
.core {
  fill: none;
  stroke-linejoin: round;
}
.lane .edge {
  stroke: #bbb;
  stroke-width: 4.4;
}
.lane .core {
  stroke: #fff;
  stroke-width: 3.4;
}
.yellow .edge {
  stroke: #c6c795;
  stroke-width: 6.8;
}
.yellow .core {
  stroke: #f4f6b4;
  stroke-width: 5.6;
}
.orange .edge {
  stroke: #c9a574;
  stroke-width: 6.4;
}
.orange .core {
  stroke: #fcd0a0;
  stroke-width: 5.2;
}
.motor .edge {
  stroke: #a84f6d;
  stroke-width: 8.4;
}
.motor .core {
  stroke: #e892a2;
  stroke-width: 7.6;
}
.trunk .edge {
  stroke: #6f4f48;
  stroke-width: 8.4;
}
.trunk .core {
  stroke: #f9b29c;
  stroke-width: 7;
}
.tunnel-road {
  fill: none;
  stroke: #f0b8c6;
  stroke-width: 6;
}
.yard {
  fill: none;
  stroke: #808080;
  stroke-width: 5.6;
}
.yard-gap {
  fill: none;
  stroke: #c9c9c9;
  stroke-width: 1.1;
  stroke-dasharray: 9 5;
}
.shed {
  fill: #707070;
}
.rail {
  fill: none;
  stroke: #666;
  stroke-width: 2.6;
}
.tram {
  fill: none;
  stroke: #7d7d74;
  stroke-width: 1.5;
}
.tunnel {
  fill: none;
  stroke: #5f5f5f;
  stroke-width: 3;
  stroke-dasharray: 5 4;
}
.label text,
.along {
  font-family: "Noto Sans", sans-serif;
  paint-order: stroke;
  stroke: rgba(255, 255, 255, 0.6);
  stroke-width: 2.4;
  stroke-linejoin: round;
  fill: #444;
}
.label.exits text {
  font-style: italic;
  fill: #b83246;
}
.label.works text {
  font-style: italic;
  fill: #80607e;
}
.along.pale {
  fill: #808080;
}
</style>
